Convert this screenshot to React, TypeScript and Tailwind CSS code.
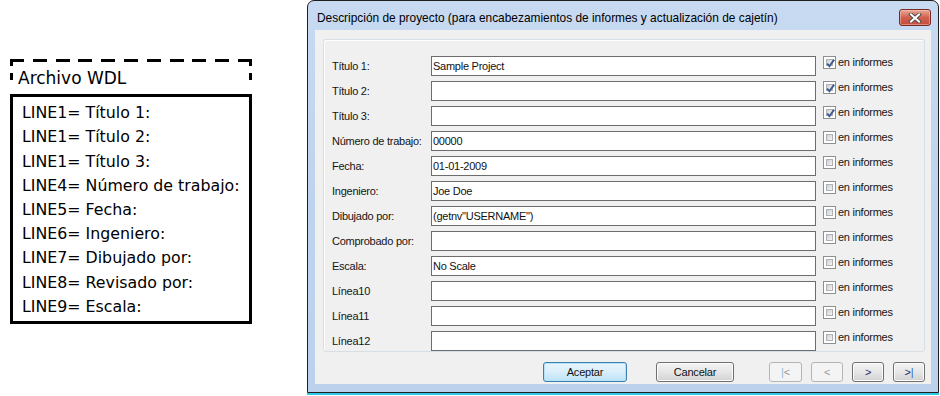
import React from "react";

type Row = { label: string; value: string; checked: boolean };

const rows: Row[] = [
  { label: "Título 1:", value: "Sample Project", checked: true },
  { label: "Título 2:", value: "", checked: true },
  { label: "Título 3:", value: "", checked: true },
  { label: "Número de trabajo:", value: "00000", checked: false },
  { label: "Fecha:", value: "01-01-2009", checked: false },
  { label: "Ingeniero:", value: "Joe Doe", checked: false },
  { label: "Dibujado por:", value: '(getnv"USERNAME")', checked: false },
  { label: "Comprobado por:", value: "", checked: false },
  { label: "Escala:", value: "No Scale", checked: false },
  { label: "Línea10", value: "", checked: false },
  { label: "Línea11", value: "", checked: false },
  { label: "Línea12", value: "", checked: false },
];

const wdl = [
  "LINE1= Título 1:",
  "LINE1= Título 2:",
  "LINE1= Título 3:",
  "LINE4= Número de trabajo:",
  "LINE5= Fecha:",
  "LINE6= Ingeniero:",
  "LINE7= Dibujado por:",
  "LINE8= Revisado por:",
  "LINE9= Escala:",
];

function CheckBox({ checked }: { checked: boolean }) {
  return (
    <span className="relative flex h-[13px] w-[13px] shrink-0 border border-[#8e8f8f] bg-white p-[2px]">
      <span className="flex-1 border border-[#aeb1b5] bg-gradient-to-br from-[#cdd0d4] to-[#f4f4f4]" />
      {checked && (
        <svg
          className="absolute left-[1px] top-[1px]"
          width="11"
          height="11"
          viewBox="0 0 11 11"
        >
          <path
            d="M2.2 5.6 L4.4 8.3 L9.2 1.6"
            fill="none"
            stroke="#3d5a93"
            strokeWidth="1.9"
          />
        </svg>
      )}
    </span>
  );
}

function WinButton({
  children,
  width,
  variant = "normal",
}: {
  children: React.ReactNode;
  width: string;
  variant?: "normal" | "default" | "disabled";
}) {
  const base =
    "flex h-[20px] items-center justify-center rounded-[3px] border text-[11px] tracking-[-0.2px] leading-none";
  const styles =
    variant === "default"
      ? "border-[#3c7fb1] bg-gradient-to-b from-[#eaf6fd] via-[#d9eefb] to-[#bde3f8] text-[#111] shadow-[inset_0_0_0_1px_#b5e2f9]"
      : variant === "disabled"
      ? "border-[#b1b5b8] bg-[#f4f4f4] text-[#9a9a9a]"
      : "border-[#707070] bg-gradient-to-b from-[#f3f3f3] via-[#e6e6e6] to-[#d2d2d2] text-[#111] shadow-[inset_0_0_0_1px_#fcfcfc]";
  return <div className={`${base} ${styles} ${width}`}>{children}</div>;
}

export default function App() {
  return (
    <div className="flex h-[396px] w-[940px] items-start overflow-hidden bg-white">
      {/* WDL file box */}
      <div className="ml-[10px] mt-[59px] flex w-[242px] flex-col font-['DejaVu_Sans',sans-serif] text-black">
        <div className="flex h-[3px] justify-between">
          {Array.from({ length: 11 }).map((_, i) => (
            <span key={i} className="h-[3px] w-[14px] bg-black" />
          ))}
        </div>
        <div className="flex h-[32px]">
          <div className="flex w-[3px] flex-col">
            <span className="h-[4px] bg-black" />
            <span className="h-[7px]" />
            <span className="h-[7px] bg-black" />
          </div>
          <div className="flex flex-1 items-center pl-[5px] pt-[1px] text-[17px] leading-none">
            Archivo WDL
          </div>
          <div className="flex w-[3px] flex-col">
            <span className="h-[4px] bg-black" />
            <span className="h-[7px]" />
            <span className="h-[7px] bg-black" />
          </div>
        </div>
        <div className="flex h-[230px] flex-col border-[3px] border-black pl-[9px] pt-[4px]">
          {wdl.map((t, i) => (
            <div
              key={i}
              className="flex h-[24.2px] items-center whitespace-nowrap text-[15.8px] leading-none"
            >
              {t}
            </div>
          ))}
        </div>
      </div>

      {/* Dialog window */}
      <div className="ml-[55px] flex w-[632px] flex-col">
        <div className="flex h-[393px] flex-col rounded-t-[7px] border border-[#1e1e1e] bg-gradient-to-b from-[#c7daf1] via-[#bed3ed] to-[#bcd2ec] px-[7px] pb-[8px] font-['Liberation_Sans',Arial,sans-serif]">
          {/* Title bar */}
          <div className="flex h-[29px] items-start justify-between">
            <div className="mt-[10px] pl-[2px] text-[11.9px] leading-[15px] text-black">
              Descripción de proyecto (para encabezamientos de informes y actualización de cajetín)
            </div>
            <div className="mt-[8px] flex h-[17px] w-[32px] items-center justify-center rounded-[3px] border border-[#772a22] bg-gradient-to-b from-[#e9a898] via-[#d0614f] to-[#c44b3a] shadow-[inset_0_0_0_1px_rgba(255,210,200,0.45)]">
              <svg width="14" height="10" viewBox="0 0 14 10">
                <path
                  d="M3 1.5 L11 8.5 M11 1.5 L3 8.5"
                  stroke="#4a4a4a"
                  strokeWidth="3.8"
                  strokeLinecap="square"
                />
                <path
                  d="M3 1.5 L11 8.5 M11 1.5 L3 8.5"
                  stroke="#ffffff"
                  strokeWidth="2"
                  strokeLinecap="square"
                />
              </svg>
            </div>
          </div>

          {/* Client area */}
          <div className="flex flex-1 flex-col bg-[#f0f0f0] pl-[8px] pr-[6px] pt-[9px] text-[11px] tracking-[-0.25px] text-[#141414]">
            <div className="flex h-[313px] flex-col gap-[5px] rounded-[3px] border border-[#d5dfe5] pl-[8px] pt-[16px] shadow-[inset_1px_1px_0_#ffffff]">
              {rows.map((r, i) => (
                <div key={i} className="flex h-[20px] items-start">
                  <div className="flex h-[20px] w-[99px] items-center">
                    {r.label}
                  </div>
                  <div className="flex h-[20px] w-[385px] items-center border border-[#6d6d6d] bg-white pl-[1px] text-[#111]">
                    {r.value}
                  </div>
                  <div className="ml-[7px] flex items-center gap-[2px]">
                    <CheckBox checked={r.checked} />
                    <span className="leading-[13px]">en informes</span>
                  </div>
                </div>
              ))}
            </div>

            {/* Button row */}
            <div className="mt-[10px] flex items-center pl-[220px]">
              <WinButton width="w-[84px]" variant="default">
                Aceptar
              </WinButton>
              <div className="ml-[29px]">
                <WinButton width="w-[78px]">Cancelar</WinButton>
              </div>
              <div className="ml-[35px] flex gap-[9px]">
                <WinButton width="w-[33px]" variant="disabled">
                  <span className="text-[#8fb4d6]">|</span>
                  <span>&lt;</span>
                </WinButton>
                <WinButton width="w-[32px]" variant="disabled">
                  &lt;
                </WinButton>
                <WinButton width="w-[32px]">
                  <span className="text-[#1b2a6b]">&gt;</span>
                </WinButton>
                <WinButton width="w-[32px]">
                  <span className="text-[#1b2a6b]">&gt;</span>
                  <span className="text-[#2a6fd0]">|</span>
                </WinButton>
              </div>
            </div>
          </div>
        </div>
        <div className="h-[2px] bg-[#2fc9e6]" />
      </div>
    </div>
  );
}
